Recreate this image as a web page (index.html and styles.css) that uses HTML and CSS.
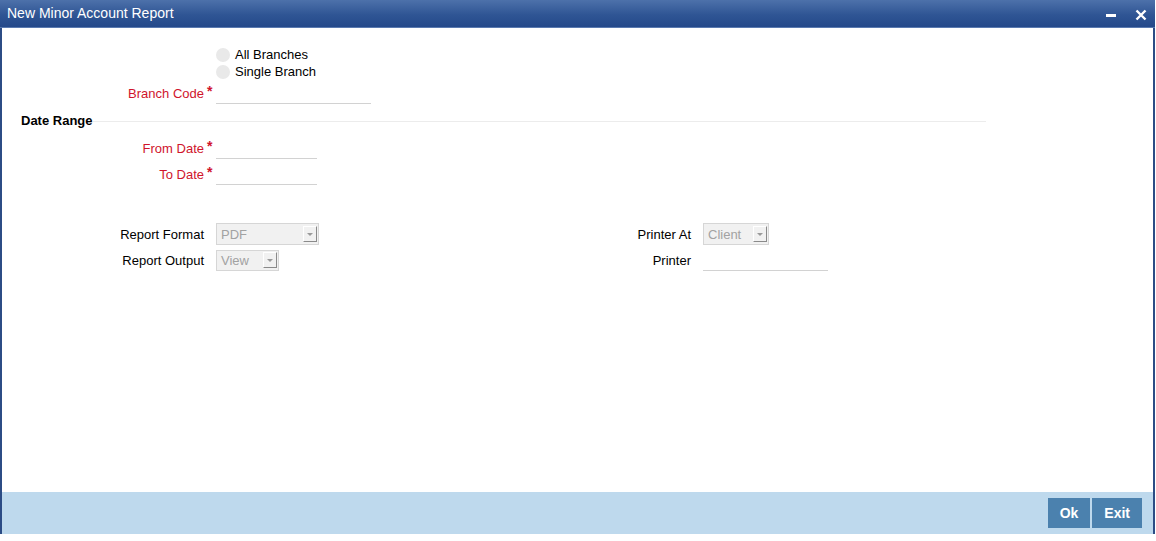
FILE: index.html
```html
<!DOCTYPE html>
<html lang="en">
  <head>
    <meta charset="UTF-8" />
    <meta name="viewport" content="width=device-width, initial-scale=1.0" />
    <title>New Minor Account Report</title>
    <link rel="stylesheet" href="styles.css">
  </head>
  <body>
    <div class="window">
      <div class="titlebar">
        <span class="title">New Minor Account Report</span>
        <div class="win-btns">
          <svg class="win-ico" width="12" height="12" viewBox="0 0 12 12"><rect x="1" y="5" width="10" height="3" fill="#fff"/></svg>
          <svg class="win-ico" width="12" height="12" viewBox="0 0 12 12"><path d="M1.5 1.5 L10.5 10.5 M10.5 1.5 L1.5 10.5" stroke="#fff" stroke-width="2.4"/></svg>
        </div>
      </div>

      <div class="content">
        <div class="radio-row">
          <span class="radio"></span><span>All Branches</span>
        </div>
        <div class="radio-row">
          <span class="radio"></span><span>Single Branch</span>
        </div>

        <div class="row row-branch">
          <label class="lbl required">Branch Code</label><span class="req">*</span>
          <span class="input w155"></span>
        </div>

        <div class="section">
          <span class="section-title">Date Range</span>
          <span class="section-line"></span>
        </div>

        <div class="row row-from">
          <label class="lbl required">From Date</label><span class="req">*</span>
          <span class="input w101"></span>
        </div>
        <div class="row row-to">
          <label class="lbl required">To Date</label><span class="req">*</span>
          <span class="input w101"></span>
        </div>

        <div class="cols">
          <div class="col">
            <div class="row row-format">
              <label class="lbl">Report Format</label><span class="req"></span>
              <span class="select w103"><span class="select-val">PDF</span><span class="arrow"></span></span>
            </div>
            <div class="row row-output">
              <label class="lbl">Report Output</label><span class="req"></span>
              <span class="select w63"><span class="select-val">View</span><span class="arrow"></span></span>
            </div>
          </div>
          <div class="col col-right">
            <div class="row row-format">
              <label class="lbl">Printer At</label><span class="req"></span>
              <span class="select w66"><span class="select-val">Client</span><span class="arrow"></span></span>
            </div>
            <div class="row row-output">
              <label class="lbl">Printer</label><span class="req"></span>
              <span class="input w125"></span>
            </div>
          </div>
        </div>
      </div>

      <div class="footer">
        <button class="btn">Ok</button>
        <button class="btn">Exit</button>
      </div>
    </div>
  </body>
</html>
```

FILE: styles.css
```css
body {
  margin: 0;
  background-color: #fff;
  font-family: 'Liberation Sans', Arial, sans-serif;
  font-size: 13px;
  color: #000;
}
.window {
  width: 1155px;
  height: 534px;
  box-sizing: border-box;
  border-left: 2px solid #2c4c85;
  border-right: 2px solid #2c4c85;
  display: flex;
  flex-direction: column;
}
.titlebar {
  height: 28px;
  flex: none;
  margin: 0 -2px;
  padding: 0 8px 0 7px;
  box-sizing: border-box;
  background: linear-gradient(#4d71aa, #2f5594 55%, #24498a);
  border-bottom: 1px solid #5a7ab0;
  display: flex;
  align-items: center;
  justify-content: space-between;
}
.title {
  color: #fff;
  font-size: 14px;
  margin-top: -2px;
}
.win-btns {
  display: flex;
  gap: 18px;
  align-items: center;
  margin-top: 2px;
}
.content {
  flex: 1;
  padding-top: 18px;
}
.radio-row {
  height: 17px;
  display: flex;
  align-items: center;
  padding-left: 214px;
}
.radio {
  width: 14px;
  height: 14px;
  border-radius: 50%;
  background-color: #e9e9e9;
  margin-right: 5px;
}
.row {
  display: flex;
  align-items: center;
  height: 22px;
}
.lbl {
  width: 202px;
  text-align: right;
}
.lbl.required {
  color: #d0142c;
}
.req {
  width: 12px;
  padding-left: 3px;
  box-sizing: border-box;
  color: #d0142c;
  font-weight: bold;
  font-size: 14px;
  align-self: flex-start;
  margin-top: 1px;
}
.input {
  display: block;
  height: 22px;
  box-sizing: border-box;
  border-bottom: 1px solid #d2d2d2;
}
.w155 { width: 155px; }
.w101 { width: 101px; }
.w125 { width: 125px; }
.w103 { width: 103px; }
.w63 { width: 63px; }
.w66 { width: 66px; }
.row-branch { margin-top: 2px; }
.section {
  margin-top: 8px;
  height: 16px;
  display: flex;
  align-items: center;
  padding-left: 19px;
}
.section-title {
  font-weight: bold;
}
.section-line {
  width: 893px;
  height: 1px;
  background-color: #ececec;
  margin-top: 2px;
}
.row-from { margin-top: 9px; }
.row-to { margin-top: 4px; }
.cols {
  display: flex;
  margin-top: 38px;
}
.col {
  width: 487px;
}
.col .row-output { margin-top: 4px; }
.col .row-output .select { height: 21px; }
.select {
  display: flex;
  align-items: center;
  justify-content: space-between;
  height: 22px;
  box-sizing: border-box;
  border: 1px solid #d6d6d6;
  background-color: #f1f1f1;
  padding: 0 1px 0 4px;
  color: #a2a2a2;
}
.arrow {
  width: 14px;
  height: 16px;
  box-sizing: border-box;
  border-top: 1px solid #fff;
  border-left: 1px solid #fff;
  border-right: 1px solid #8a8a8a;
  border-bottom: 1px solid #8a8a8a;
  background-color: #f1f1f1;
  position: relative;
}
.arrow::after {
  content: '';
  position: absolute;
  left: 3px;
  top: 6px;
  border-left: 3px solid transparent;
  border-right: 3px solid transparent;
  border-top: 3px solid #9a9a9a;
}
.footer {
  height: 42px;
  flex: none;
  background-color: #bed9ed;
  display: flex;
  justify-content: flex-end;
  align-items: center;
  gap: 2px;
  padding-right: 11px;
}
.btn {
  height: 30px;
  border: none;
  background-color: #4b81ae;
  color: #fff;
  font-family: 'Liberation Sans', Arial, sans-serif;
  font-weight: bold;
  font-size: 14px;
  padding: 0 12px;
  margin: 0;
}
```
